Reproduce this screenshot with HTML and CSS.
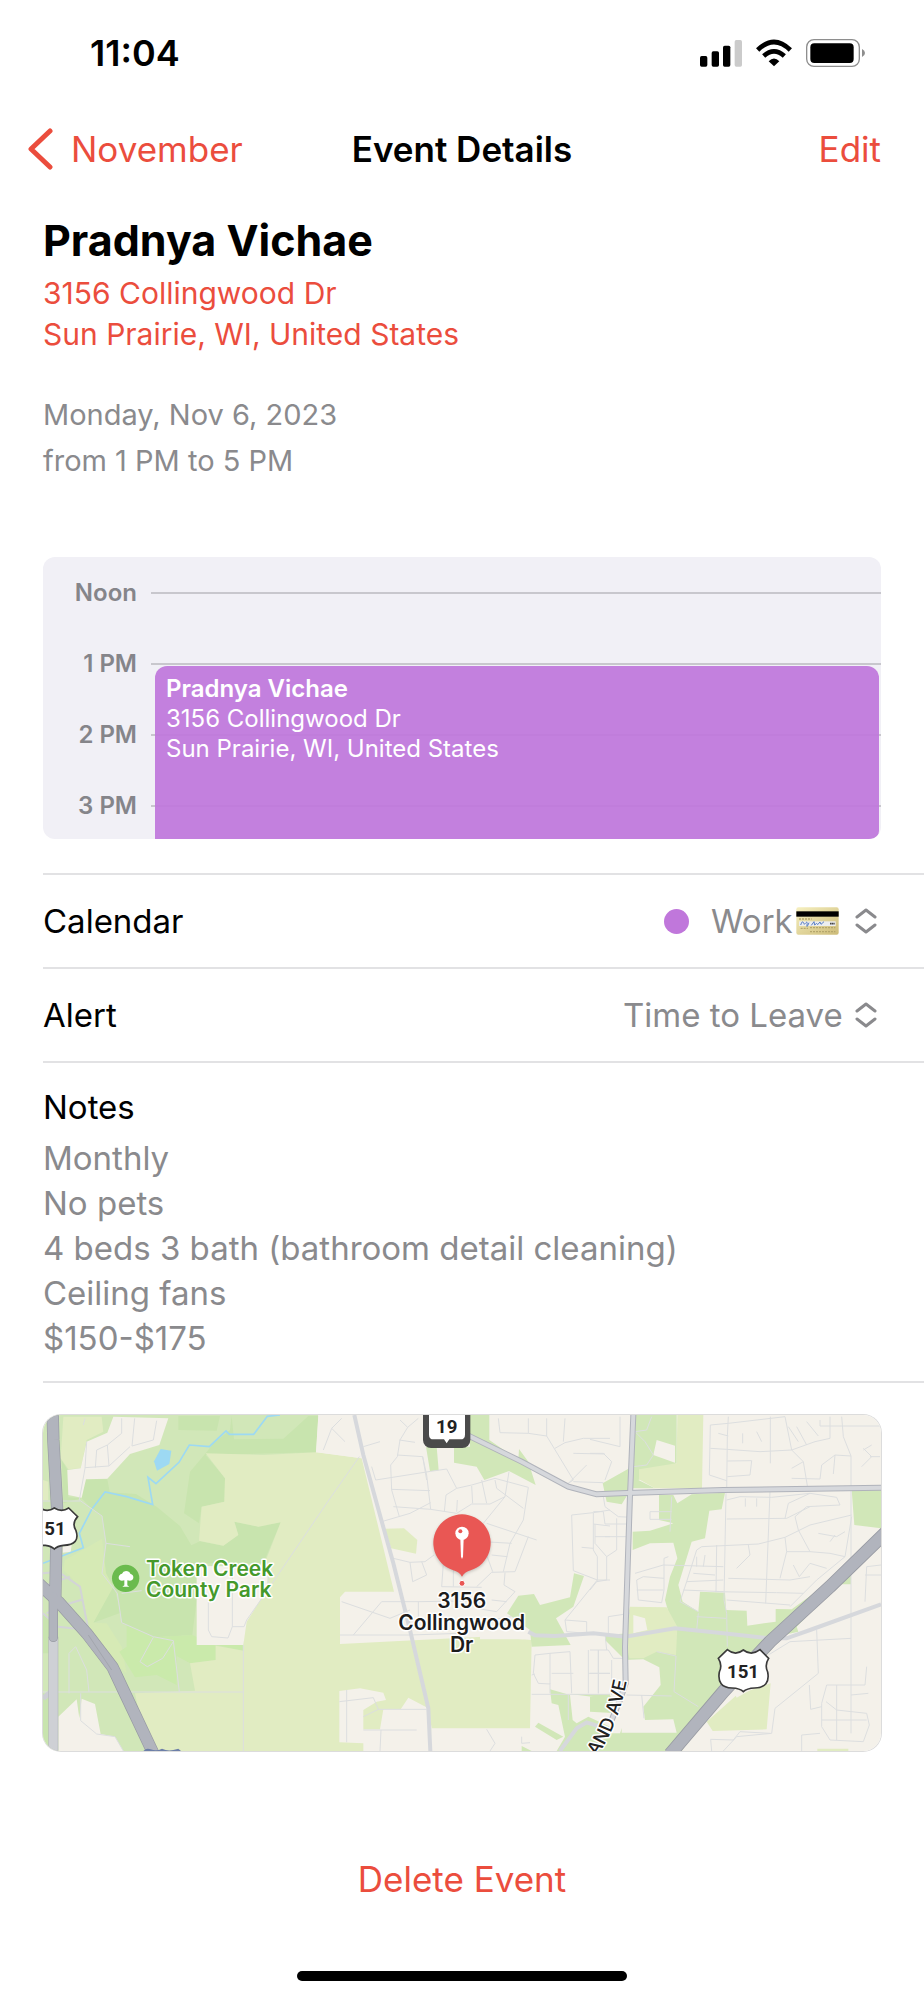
FILE: index.html
```html
<!DOCTYPE html>
<html lang="en">
<head>
    <meta charset="UTF-8">
    <meta name="viewport" content="width=device-width, initial-scale=1">
    <title>Event Details</title>
    <link rel="stylesheet" href="styles.css">
</head>
<body>

<div class="status-bar">
    <span class="time">11:04</span>
    <div class="status-icons">
        <svg width="42" height="28" viewBox="714 114 126 84" aria-hidden="true">
            <rect x="714" y="165" width="22" height="32" rx="5"/>
            <rect x="749" y="151" width="22" height="46" rx="5"/>
            <rect x="783" y="134" width="22" height="63" rx="5"/>
            <rect x="818" y="117" width="22" height="80" rx="5" fill="#cbcbcb"/>
        </svg>
        <svg width="36" height="28" viewBox="882 114 108 84" aria-hidden="true">
            <path d="M936 196L920 181Q936 164 952 181Z"/>
            <path d="M905 165Q936 137 967 165M887 147Q936 99 985 147" fill="none" stroke="#000" stroke-width="14"/>
        </svg>
        <svg width="60" height="28" viewBox="1032 114 180 84" aria-hidden="true">
            <rect x="1034" y="116" width="158" height="80" rx="22" fill="none" stroke="#8e8e8e" stroke-width="4"/>
            <rect x="1045" y="127" width="130" height="59" rx="12"/>
            <path d="M1200 144Q1209 148 1209 156T1200 168Z" fill="#8e8e8e"/>
        </svg>
    </div>
</div>

<header class="nav-bar">
    <a class="back" href="#">
        <svg width="26" height="42" viewBox="0 0 26 42" aria-hidden="true">
            <path d="M23 3L4 21L23 39" fill="none" stroke="#eb4d3d" stroke-width="5" stroke-linecap="round" stroke-linejoin="round"/>
        </svg>
        <span>November</span>
    </a>
    <h1 class="nav-title">Event Details</h1>
    <button class="edit" type="button">Edit</button>
</header>

<main>
    <section class="summary">
        <h2 class="event-name">Pradnya Vichae</h2>
        <a class="address" href="#">3156 Collingwood Dr<br>Sun Prairie, WI, United States</a>
        <p class="when">Monday, Nov 6, 2023<br>from 1 PM to 5 PM</p>
    </section>

    <section class="timeline">
        <div class="hour"><span>Noon</span></div>
        <div class="hour"><span>1 PM</span></div>
        <div class="hour"><span>2 PM</span></div>
        <div class="hour"><span>3 PM</span></div>
        <div class="block">
            <strong>Pradnya Vichae</strong><br>
            3156 Collingwood Dr<br>
            Sun Prairie, WI, United States
        </div>
    </section>

    <div class="row">
        <label for="calendar">Calendar</label>
        <div class="value">
            <span class="dot"></span>
            <select id="calendar">
                <option>Work</option>
            </select>
            <svg class="card" width="43" height="28" viewBox="0 0 129 84" aria-hidden="true">
                <defs>
                    <linearGradient id="gold" x1="0" y1="0" x2="1" y2="1">
                        <stop offset="0" stop-color="#f6f0c0"/>
                        <stop offset="1" stop-color="#cdbb78"/>
                    </linearGradient>
                </defs>
                <rect x="1" y="1" width="127" height="82" rx="6" fill="url(#gold)"/>
                <rect x="1" y="13" width="127" height="16" fill="#000"/>
                <rect x="9" y="43" width="110" height="14" fill="#eceef0"/>
                <path d="M14 54q5-14 8-8t3 6 5-5 3 7 6-7M46 55l8-11 2 10 6-5 3 4 7-8 3 7 9-8" fill="none" stroke="#5a7fc4" stroke-width="3"/>
                <path d="M102 50h14" stroke="#444" stroke-width="5" stroke-dasharray="4 1"/>
                <path d="M9 36h38M14 64h22M42 62h76M42 74h76" fill="none" stroke="#b5a66c" stroke-width="4" stroke-dasharray="6 3"/>
            </svg>
            <svg class="chevrons" width="22" height="26" viewBox="0 0 22 26" aria-hidden="true">
                <path d="M2 9L11 2L20 9M2 17L11 24L20 17"/>
            </svg>
        </div>
    </div>

    <div class="row">
        <label for="alert">Alert</label>
        <div class="value">
            <select id="alert">
                <option>Time to Leave</option>
            </select>
            <svg class="chevrons" width="22" height="26" viewBox="0 0 22 26" aria-hidden="true">
                <path d="M2 9L11 2L20 9M2 17L11 24L20 17"/>
            </svg>
        </div>
    </div>

    <section class="notes">
        <h3>Notes</h3>
        <p>Monthly<br>No pets<br>4 beds 3 bath (bathroom detail cleaning)<br>Ceiling fans<br>$150-$175</p>
    </section>

    <div class="map">
        <svg viewBox="39 45 2514 1008" role="img" aria-label="Map of 3156 Collingwood Dr">
            <rect x="39" y="45" width="2514" height="1008" fill="#f4f1ea"/>

            <!-- west: county park -->
            <g>
                <path class="park" d="M39 45H865L858 157L900 400L700 735L500 880L350 1053H39Z"/>
                <path class="wood" d="M445 48H570L560 92L445 90ZM605 48L612 118L760 116L800 80L835 48H865L858 157L527 165L585 235L583 305L515 320L507 370L462 340L480 215L527 160L550 130L600 90ZM165 238L232 238L240 280L225 276L185 328L155 295Z"/>
                <path class="wood" d="M225 276L318 282L380 320L450 378L484 436L510 424L580 437L625 405L613 365L685 380L752 367L700 490H500V600L487 705L370 712L275 668L262 580L216 520L228 430L216 348L185 328ZM250 550L190 668L272 638ZM95 180L112 210L115 292L155 295L100 310Z"/>
                <path class="meadow" d="M100 50L215 50L220 95L170 120L152 205L115 208L92 175ZM39 240L55 245V300H39Z"/>
                <path class="grove" d="M175 440L216 416L228 520L250 560L190 668L230 670L275 740L290 820L255 790L180 690L150 560L100 510L105 480Z"/>
                <path class="lawn" d="M290 675L370 712L487 705L557 737V780L480 790L440 770V855L380 825L315 832L268 755L290 740ZM560 735L640 735V752Z"/>
                <path class="park" d="M440 768L480 790L495 872H445Z"/>
                <path class="meadow" d="M527 160L700 165L862 157L995 175L1092 575H945L930 592V732L1360 710L1505 720L1500 985H1205L1200 1053H350L315 880L495 872L480 790L557 780V737L640 752L642 680L700 500L752 367L685 380L613 365L625 405L580 437L507 422L515 320L583 305L585 235Z"/>
                <path class="land" d="M250 50L415 55L388 135L300 162L232 236L168 238L155 293L115 285L112 210L152 205L170 125L232 98ZM500 498L715 500L710 570L650 665L640 735H500ZM865 45H995V175L858 157ZM85 950L140 898L148 955L155 896L195 912L212 1002L255 1010L280 1053H85ZM98 440L125 435L122 455L98 458Z"/>
                <path class="wood" d="M39 880L56 890V1053H60L39 1020ZM39 640L58 655V760H39Z"/>
                <path class="water-area" d="M392 147L424 152L418 192L381 212L372 184Z"/>
                <path class="water" d="M39 490L160 443L148 400L185 328L225 276L290 290L368 314L354 232L378 251L447 187L478 135L538 140L588 93L598 103H671L712 49L750 45"/>
            </g>

            <!-- centre -->
            <g transform="translate(840 0)">
                <path class="park" d="M480 45H538V120L625 180L627 147L655 185L677 255L597 213L523 240L500 200L432 188V140H480ZM348 140H380L386 211L360 214ZM591 640L625 587L672 582L690 615L780 592L792 520L822 528L790 620L738 655L782 735L665 740L660 690ZM720 868L780 885L788 960L800 970L835 950L900 980V1053H740L765 1010L745 915L725 910ZM685 968L760 1010L740 1020L675 980ZM635 1038L665 1053H635ZM780 882H900V897Z"/>
                <path class="meadow" d="M225 386L282 385L322 420L318 461L243 445Z"/>
                <path class="land" d="M88 873L150 865L220 878L228 900L200 905L160 930V1030L88 1027ZM272 928L295 893L355 925L365 985V1053H160V988H210L220 928ZM510 700V718H640L660 690Z"/>
            </g>

            <!-- east -->
            <g transform="translate(1680 0)">
                <path class="park" d="M132 45H260V190L145 240L195 265H125L95 313L50 305L38 250L118 205ZM207 285L250 285L262 310L305 283L405 278L395 328L358 332L345 415L305 425L265 555L278 605L325 635L330 575L405 578L408 630L470 632L472 677L557 665V627L605 628L755 520L783 500V553H745L620 680L625 695L580 705L535 760L400 870L275 1053H0V1000L90 1000L105 960V780L45 720V705L250 690L225 600L240 530L262 475L250 428L180 430L128 450V395L180 392L250 370L207 360ZM785 270H873V385L793 375ZM0 890L60 885L80 940L0 935Z"/>
                <path class="meadow" d="M262 45H340L336 265L195 265L147 238V208L260 190ZM120 620L230 622L262 680L258 765L200 755L160 775H118L100 700ZM350 965L440 885L542 850L530 988L368 993ZM682 1046H775V1053H682Z"/>
                <path class="land" d="M200 120L255 137V188L190 165ZM100 780L160 778L208 802L212 855L160 920L165 960L250 958L260 998H95ZM130 645L165 655L172 690L130 700ZM432 878L490 865L440 893Z"/>
            </g>

            <g class="street">
                <path d="M165 55L160 75M275 55V100L232 135L237 198L165 203M232 135L200 150L196 203M314 55L306 138L370 120L380 62M300 140L237 198M170 125L165 205L148 300L216 348L228 430L216 520L262 580L275 668L370 710L430 722L448 876M228 430L300 440M430 725L398 775L352 800L330 785L370 712M150 303H39M39 876H640M275 580L335 572M535 600V690L545 710L594 714L607 680V515M607 680H642L650 660L720 560L900 295L988 170M640 735V1053M152 880V962L200 1002L255 1010L280 1053M177 876L170 810L137 740L117 760V880M715 500V590"/>
                <g transform="translate(840 0)">
                    <path d="M95 55L65 85L40 150M65 85L105 125M160 140L210 125M185 200L197 240L362 214L410 207L440 265M270 60L293 82L325 55M293 82L270 120L262 170L242 195L245 270L268 350M268 120L315 127M262 165L338 170L350 225L362 328M245 268L360 272M215 365L300 340L362 308M250 320L362 328L440 340L485 312L540 312L585 290L597 215M403 335L408 285L440 265L485 255L555 235L655 262L640 360L600 430L580 515M338 170L350 240M440 335L442 300M485 258L488 310M515 240L530 310M555 240L560 265L640 325M520 370L585 290M530 370L680 420M520 425L605 430M655 410L615 515L545 517L500 560M545 465L592 470M530 465L548 515M585 518L582 555L615 575L560 635L500 625M250 475L300 487L345 485L372 465M300 487L308 545L350 525L335 485M400 490L395 560L515 562M430 470V560M95 605L240 655L300 630M130 705L215 605L330 605L520 602M90 705H300M325 605V650M300 705L450 700M545 600L590 605M540 660L605 650M88 905L190 893L205 928H350M110 870V1027M160 990H320M213 990L210 1053M160 950L205 928M530 988L555 1030L540 1053M635 1010V1030L660 1028"/>
                    <path d="M565 55L570 98L655 100L710 108M710 55V108L790 240L775 250L830 195M655 55V100M735 145L765 128L820 115H900M765 55L760 125M790 160L885 162M790 245L880 248M785 345L850 338L900 330M785 345L790 512L862 540L900 540M850 338V450L862 470V540M815 442L850 445M850 372L900 378M855 410H900M862 540L765 660L770 695L830 700V665L765 660M665 883H900M675 765L670 820L685 850L720 852V760L675 765M720 760L780 755L785 880M725 820H790M835 750V880M865 750V880M835 820H900M775 885V960M665 825L675 822M720 850V880"/>
                </g>
                <g transform="translate(1680 0)">
                    <path d="M90 50V140L0 118M185 50L170 90L135 95L165 125L190 165L170 195L130 200M0 160H40L65 185L45 240M40 290L45 320L85 350L125 352M10 335H40L45 372H120M15 372V430L50 470L80 450V355M45 410H120M50 470V540L20 545L0 570M245 290L240 395M180 335H245M180 335V358H245M140 540L145 600L215 608L222 570V475L235 470M140 540L160 530L222 535M140 570H220M135 520L220 495L400 500M270 605L290 545L320 450L335 440L505 432L585 412L660 375L785 345M290 545L400 540M325 635L270 605M310 520L375 525M325 640L320 690M320 650L408 655M380 435L378 575M320 470V500M345 465L340 500M280 570L400 575M375 575L560 578L640 580M408 280L402 600L410 640L412 740M415 50L412 110L410 275M361 75L358 225L410 242M361 75L415 70L585 50M385 100L415 108M361 145L410 148L510 155L605 150L640 185L655 275M458 100V130M500 95L515 125M541 50V190M412 183L485 182L480 225L412 230M585 50L605 150L675 125L720 115V50M595 80L625 125M620 80L650 135M650 65L685 108M605 235L690 237L695 195L735 165L783 168M690 60V78H870M755 50L760 110L783 168V1000M820 145L845 170L815 200M820 150L845 135M840 170H870M730 222L735 165M605 205L640 185M410 300L450 290L545 292L660 280L740 292L750 315L650 320L615 350L625 390L660 455M466 295V320M500 295V320M540 275L527 610M410 357L590 355L660 320M585 355L595 310L660 280M585 412L590 455L660 455L720 460L765 470L785 350M685 400L740 410L765 395M720 425L735 405M590 455L570 535M610 495L628 530L660 490L710 505M475 435L480 465L440 505M415 535L600 540L660 530M410 600L600 615M765 470L680 540L600 620M873 495L830 500L825 605M825 525H873M535 765L600 725L783 715M680 690L685 820L555 925L545 1000L440 1010L400 1053M658 855L662 928L695 920M710 855H825L830 800M710 855L695 910V980L720 1020L820 1025L838 975L830 940L740 930L708 905M740 855V1020M783 885L835 880M695 960H830M635 1053V1005L690 1000M365 1053L362 1018L430 1020L450 995L540 1000M0 750H55L70 775H105M25 750V880M65 780V885M0 820H60M110 885L245 888M155 885L162 955M200 755L258 768L252 875L325 920M55 700V650L120 640M45 700L50 750"/>
                </g>
            </g>

            <!-- ramps and secondary roads -->
            <path d="M39 520L85 515L150 560L175 690L85 680L39 640M85 620L160 598M39 560L120 530M50 640L110 605" fill="none" stroke="#d3d4d7" stroke-width="6"/>
            <path d="M39 895L70 870" stroke="#cdcfd4" stroke-width="16"/>
            <path class="road" d="M973 45L1000 165L1090 490L1140 690L1195 925L1201 1053"/>
            <g transform="translate(1680 0)">
                <path class="edge" d="M-420 80L-205 185L-65 260L20 283L110 279L400 270L873 263"/>
                <path class="road" d="M-185 695L-165 706L-105 708L10 700L105 710L255 685L400 700L540 715L590 715L660 690L873 613"/>
                <path class="edge" d="M130 45L122 240L120 285L105 740L107 850L90 900L65 960"/>
                <path class="road" d="M-90 1053L-40 985L-10 967L30 980"/>
                <path class="road" d="M-420 80L-205 185L-65 260L20 283L110 279L400 270L873 263"/>
                <path class="road" d="M130 45L122 240L120 285L105 740L107 850L90 900L65 960"/>
            </g>

            <!-- highways -->
            <g fill="none" stroke-linejoin="round">
                <path d="M70 710V1060" stroke="#b6b8be" stroke-width="30"/>
                <path d="M70 710V1060" stroke="#ced0d5" stroke-width="26"/>
                <path d="M20 545L85 605L170 700L248 802L280 870L370 1060M68 40L70 120L81 320L76 590" stroke="#989ba3" stroke-width="37"/>
                <path d="M70 590V712" stroke="#989ba3" stroke-width="28" stroke-linecap="round"/>
                <path d="M20 545L85 605L170 700L248 802L280 870L370 1060M68 40L70 120L81 320L76 590" stroke="#b1b4bd" stroke-width="33"/>
                <path d="M70 590V712" stroke="#b1b4bd" stroke-width="24" stroke-linecap="round"/>
                <path d="M175 705L245 810" stroke="#a3a6ad" stroke-width="3"/>
                <g transform="translate(1680 0)">
                    <path d="M900 385L720 560L540 725L400 875L240 1063" stroke="#989ba3" stroke-width="40"/>
                    <path d="M900 385L720 560L540 725L400 875L240 1063" stroke="#b1b4bd" stroke-width="35"/>
                </g>
            </g>
            <path d="M340 1053Q350 1042 362 1048Q380 1054 396 1046Q412 1054 430 1050L445 1046L453 1053Z" fill="#6d7fa8"/>

            <!-- route shields -->
            <path class="shield" d="M30 324Q52 338 73 324Q95 338 116 324L143 350Q124 370 138 392Q152 434 100 436Q82 438 73 447Q64 438 46 436H30Z"/>
            <text class="route" x="75" y="405">51</text>
            <path class="shield" transform="translate(1680 0)" d="M412 749Q436 769 460 750Q484 769 510 749L536 775Q523 795 533 816Q542 862 494 864Q470 865 460 875Q450 865 426 864Q380 862 388 816Q398 795 385 775Z"/>
            <text class="route" x="2139" y="834">151</text>
            <rect x="1179" y="0" width="142" height="144" rx="24" fill="#4a4a4a"/>
            <path d="M1197 30H1305V104Q1305 118 1291 118H1258L1250 130L1242 118H1211Q1197 118 1197 104Z" fill="#fff"/>
            <text class="route" x="1250" y="98">19</text>

            <path id="avenue" d="M1700 1070Q1775 965 1797 800" fill="none"/>
            <text class="avenue"><textPath href="#avenue">AND AVE</textPath></text>

            <!-- park marker -->
            <circle cx="287" cy="535" r="41" fill="#6bbb4e"/>
            <path d="M283 556V541Q268 545 266 534Q266 523 276 521Q279 513 288 513Q298 513 301 521Q311 524 310 534Q307 545 292 541V556L298 560H277Z" fill="#fff"/>
            <text class="park-name" x="348" y="527">Token Creek<tspan x="348" y="591">County Park</tspan></text>

            <!-- event pin -->
            <g transform="translate(840 0)">
                <path class="pin" d="M456 530Q447 515 430 511A86 86 0 1 1 482 511Q465 515 456 530Z"/>
                <circle cx="456" cy="550" r="9" fill="#e95754" stroke="#fff" stroke-width="3"/>
                <circle cx="456" cy="400" r="20" fill="#fff"/>
                <circle cx="451" cy="394" r="6" fill="#e95754"/>
                <path d="M451 416H461L459 470L456 477L453 470Z" fill="#fff"/>
                <text class="pin-name" x="455" y="625">3156<tspan x="455" y="690">Collingwood</tspan><tspan x="455" y="755">Dr</tspan></text>
            </g>
        </svg>
    </div>

    <button class="delete" type="button">Delete Event</button>
</main>

<div class="home-indicator"></div>

</body>
</html>
```

FILE: styles.css
```css
* { margin: 0; padding: 0; box-sizing: border-box; }
body {
    background: #fff;
    color: #000;
    font-family: Inter, "Liberation Sans", sans-serif;
    font-size: 33px;
}
a { text-decoration: none; }
svg { display: block; }
button, select {
    border: 0;
    background: none;
    font: inherit;
    color: inherit;
    appearance: none;
    cursor: pointer;
}

/* Top bars */
.status-bar {
    display: flex;
    justify-content: space-between;
    align-items: center;
    height: 105px;
    padding: 0 58px 0 90px;
}
.time {
    font-size: 36px;
    font-weight: 600;
}
.status-icons {
    display: flex;
    gap: 14px;
}
.nav-bar {
    display: grid;
    grid-template-columns: 1fr auto 1fr;
    align-items: center;
    height: 88px;
    padding: 0 43px;
    font-size: 35px;
}
.back, .edit, .delete {
    color: #eb4d3d;
}
.back {
    display: flex;
    align-items: center;
    gap: 18px;
    margin-left: -16px;
}
.nav-title {
    font-size: 35px;
    font-weight: 600;
}
.edit {
    justify-self: end;
}

/* Event summary */
.summary {
    padding: 21px 43px 0;
}
.event-name {
    font-size: 43px;
    font-weight: 700;
    line-height: 52px;
}
.address {
    display: block;
    margin-top: 7px;
    color: #eb4d3d;
    font-size: 30px;
    line-height: 41px;
}
.when {
    margin-top: 37px;
    color: #8a8a8d;
    font-size: 29px;
    line-height: 46px;
}

/* Day timeline, cut off partway through the last hour */
.timeline {
    position: relative;
    height: 282px;
    margin: 73px 43px 34px;
    border-radius: 12px;
    background: #f1f0f6;
    overflow: hidden;
}
.hour {
    display: flex;
    align-items: center;
    gap: 14px;
    height: 71px;
    color: #85858a;
    font-size: 24px;
    font-weight: 600;
}
.hour span {
    width: 94px;
    text-align: right;
}
.hour::after {
    content: "";
    flex: 1;
    height: 2px;
    background: #c8c7cd;
}
.block {
    position: absolute;
    top: 109px;
    right: 2px;
    bottom: 0;
    left: 112px;
    padding: 8px 11px;
    border-radius: 12px 12px 8px 0;
    background: rgba(192, 119, 219, 0.93);
    color: #fff;
    font-size: 24px;
    line-height: 30px;
}
.block strong { font-weight: 600; }

/* Rows */
.row {
    display: flex;
    justify-content: space-between;
    align-items: center;
    height: 94px;
    margin-left: 43px;
    padding-right: 47px;
    border-top: 2px solid #e2e2e4;
}
.value {
    display: flex;
    align-items: center;
    color: #8a8a8d;
}
.dot {
    width: 25px;
    height: 25px;
    margin-right: 22px;
    border-radius: 50%;
    background: #c077db;
}
.card {
    margin-left: 3px;
    margin-right: 4px;
}
.chevrons {
    margin-left: 12px;
    fill: none;
    stroke: #8a8a8d;
    stroke-width: 3;
    stroke-linecap: round;
    stroke-linejoin: round;
}
.notes {
    margin-left: 43px;
    padding: 22px 43px 20px 0;
    border-top: 2px solid #e2e2e4;
    border-bottom: 2px solid #e2e2e4;
    line-height: 45px;
}
.notes h3 {
    font-size: 33px;
    font-weight: 400;
}
.notes p {
    margin-top: 6px;
    color: #8a8a8d;
}

/* Map */
.map {
    margin: 32px 43px 0;
    border-radius: 18px;
    box-shadow: 0 0 0 1px #dcdcdc;
    overflow: hidden;
}
.map svg {
    width: 100%;
    height: auto;
}
.land { fill: #f4f1ea; }
.park { fill: #d1e7b8; }
.wood { fill: #c8e4ae; }
.grove { fill: #d6eab5; }
.lawn { fill: #caeaab; }
.meadow { fill: #e1ecc2; }
.water-area { fill: #9dd9f3; }
.water {
    fill: none;
    stroke: #9dd9f3;
    stroke-width: 5;
}
.street {
    fill: none;
    stroke: #dcdedf;
    stroke-width: 3;
}
.road {
    fill: none;
    stroke: #d6d8dc;
    stroke-width: 12;
}
.edge {
    fill: none;
    stroke: #b0b3bb;
    stroke-width: 18;
}
.shield {
    fill: #fff;
    stroke: #3a3a3a;
    stroke-width: 5;
}
.route {
    fill: #222;
    font-family: Roboto, sans-serif;
    font-size: 56px;
    font-weight: 700;
    text-anchor: middle;
}
.avenue, .park-name, .pin-name {
    stroke: #fff;
    stroke-width: 9;
    stroke-linejoin: round;
    paint-order: stroke;
}
.avenue {
    fill: #222;
    font-size: 56px;
    font-weight: 500;
}
.park-name {
    fill: #45992b;
    font-size: 63px;
    font-weight: 600;
}
.pin {
    fill: #e95754;
    filter: drop-shadow(0 4px 4px rgba(0, 0, 0, 0.2));
}
.pin-name {
    fill: #1c1c1c;
    font-size: 63px;
    font-weight: 600;
    text-anchor: middle;
}

.delete {
    display: block;
    height: 60px;
    margin: 98px auto 62px;
    font-size: 35px;
}
.home-indicator {
    width: 330px;
    height: 10px;
    margin: 0 auto 18px;
    border-radius: 5px;
    background: #000;
}
```
